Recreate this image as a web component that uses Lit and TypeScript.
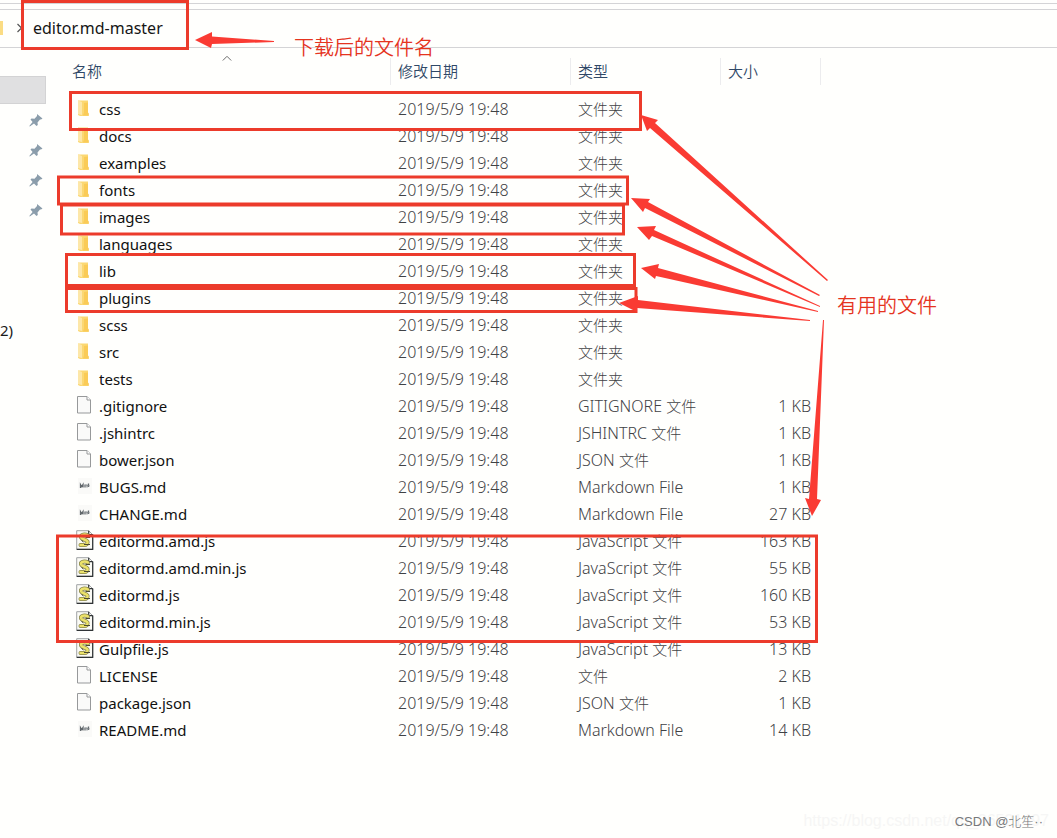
import { LitElement, html, css, svg } from "lit";
import { customElement, property } from "lit/decorators.js";

type Kind = "folder" | "file" | "md" | "js";

interface Entry {
  name: string;
  kind: Kind;
  format: string;
  suffix: string;
  size: string;
}

const MODIFIED = "2019/5/9 19:48";

const folder = (name: string): Entry => ({ name, kind: "folder", format: "", suffix: "文件夹", size: "" });
const file = (name: string, kind: Kind, format: string, suffix: string, size: string): Entry =>
  ({ name, kind, format, suffix, size });

const ENTRIES: Entry[] = [
  ...["css", "docs", "examples", "fonts", "images", "languages", "lib", "plugins", "scss", "src", "tests"].map(folder),
  file(".gitignore", "file", "GITIGNORE ", "文件", "1 KB"),
  file(".jshintrc", "file", "JSHINTRC ", "文件", "1 KB"),
  file("bower.json", "file", "JSON ", "文件", "1 KB"),
  file("BUGS.md", "md", "Markdown File", "", "1 KB"),
  file("CHANGE.md", "md", "Markdown File", "", "27 KB"),
  file("editormd.amd.js", "js", "JavaScript ", "文件", "163 KB"),
  file("editormd.amd.min.js", "js", "JavaScript ", "文件", "55 KB"),
  file("editormd.js", "js", "JavaScript ", "文件", "160 KB"),
  file("editormd.min.js", "js", "JavaScript ", "文件", "53 KB"),
  file("Gulpfile.js", "js", "JavaScript ", "文件", "13 KB"),
  file("LICENSE", "file", "", "文件", "2 KB"),
  file("package.json", "file", "JSON ", "文件", "1 KB"),
  file("README.md", "md", "Markdown File", "", "14 KB"),
];

@customElement("file-icon")
export class FileIcon extends LitElement {
  @property() kind: Kind = "file";

  static styles = css`
    :host { display: block; width: 18px; height: 20px; padding-bottom: 3px; }
    .glyph { display: block; }
  `;

  private shape() {
    switch (this.kind) {
      case "folder":
        return svg`
          <path d="M2 2.500h10v14l1 1.500H4l-2-1z" fill="#fbd873"/>
          <path d="M2 2.500l4 1.500v13l-4-1z" fill="#fde7a8"/>
          <path d="M8 5l4-.5v10l1 1v2H7l1-3z" fill="#fac850" opacity=".8"/>`;
      case "md":
        return svg`
          <rect x="2" y="2" width="14" height="16" fill="#fafaf8"/>
          <path d="M4.500 12V8.500l1.200 2L7 8.500v3M9 8.500v3M12.500 7.500v3.500" fill="none" stroke="#62686c" stroke-width="1.300"/>
          <path d="M9.500 9h1.500v2.500M11.500 9.700h2" fill="none" stroke="#7d8386" stroke-width="1.100"/>`;
      case "js":
        return svg`
          <path d="M.7.7h12l4 4v14.600h-16z" fill="#fbfbf6" stroke="#a0a3a5" stroke-width="1"/>
          <path d="M12.700.7v4h4M16.700 4.500v14.800h-16" fill="none" stroke="#303436" stroke-width="1.200"/>
          <path d="M12 5.500C9 3.800 4.500 4.500 5 7.300c.5 2.300 5.500 2 6.500 4.200.6 2-1 3.500-3.500 3.500H4.500" fill="none" stroke="#85824a" stroke-width="4" stroke-linecap="round"/>
          <path d="M12 5.500C9 3.800 4.500 4.500 5 7.300c.5 2.300 5.500 2 6.500 4.200.6 2-1 3.500-3.500 3.500H4.500" fill="none" stroke="#ece26a" stroke-width="2.500" stroke-linecap="round"/>
          <path d="M9.500 7.500h4.500M8 14.500h6M5.500 10.500l2 1.500" fill="none" stroke="#4b4a32" stroke-width="1"/>`;
      default:
        return svg`
          <path d="M1.500 1.500h9.500l3.500 3.500v13h-13z" fill="#fafaf9" stroke="#97999a"/>
          <path d="M11 1.500v3.500h3.500" fill="#fff" stroke="#97999a"/>`;
    }
  }

  render() {
    return html`<svg class="glyph" width="18" height="20" viewBox="0 0 18 20" aria-hidden="true">${this.shape()}</svg>`;
  }
}

@customElement("address-bar")
export class AddressBar extends LitElement {
  static styles = css`
    :host { display: block; padding-top: 3px; }
    .strip { height: 5px; border-top: 1px solid #d4d4d6; }
    .path {
      display: flex; align-items: center; height: 35px; padding-bottom: 2px;
      border-top: 1px solid #d4d4d6; border-bottom: 1px solid #d4d4d6;
    }
    .tip { width: 3px; height: 14px; background: #fbdc83; }
    .chevron { margin-left: 13px; }
    .crumb { margin-left: 10px; font-size: 16px; line-height: 24px; color: #161616; text-decoration: none; }
  `;

  render() {
    return html`
      <div class="strip"></div>
      <nav class="path" aria-label="Path">
        <span class="tip"></span>
        <svg class="chevron" width="7" height="10" viewBox="0 0 7 10" aria-hidden="true">
          <path d="M1.500 1l4 4-4 4" fill="none" stroke="#555" stroke-width="1.200"/>
        </svg>
        <a class="crumb" href="#">editor.md-master</a>
      </nav>`;
  }
}

@customElement("side-nav")
export class SideNav extends LitElement {
  static styles = css`
    :host { display: block; width: 46px; padding-top: 27px; }
    .list { list-style: none; margin: 0; padding: 0; }
    .item { display: flex; align-items: center; justify-content: flex-end; height: 30px; padding-right: 3px; }
    .selected { background: #e0e0e1; height: 28px; margin: 1px 0; border: 1px solid #d3d3d4; border-left: 0; box-sizing: border-box; }
    .drive { justify-content: flex-start; margin-top: 90px; font-size: 15px; color: #1b1b1b; }
  `;

  render() {
    return html`
      <ul class="list">
        <li class="item selected"></li>
        ${[1, 2, 3, 4].map(() => html`
          <li class="item">
            <svg width="14" height="14" viewBox="0 0 14 14" aria-hidden="true">
              <path d="M8 1l5.500 4.500-1.500 1-1 0-2.500 3 .3 2.500-1.300 1L5 10.500.8 13.600l-.5-.5L3.600 9 1.500 6.500l1-1 3 .2L8 3z" fill="#8b9dab"/>
            </svg>
          </li>`)}
        <li class="item drive">2)</li>
      </ul>`;
  }
}

@customElement("file-table")
export class FileTable extends LitElement {
  static styles = css`
    :host { display: block; flex: 1; min-width: 0; padding-top: 10px; }
    .files { width: 100%; table-layout: fixed; border-collapse: collapse; font-size: 15px; line-height: 27px; }
    .c-name { width: 327px; }
    .c-date { width: 180px; }
    .c-type { width: 150px; }
    .c-size { width: 100px; }
    .head { padding: 0 0 11px; font-weight: 350; text-align: left; }
    .sort {
      position: relative; display: block; width: 100%; height: 27px; padding: 0 0 0 7px; border: 0;
      border-right: 1px solid #ececee; background: none; color: #2f4867; font: inherit; text-align: left;
    }
    .first { padding-left: 8px; }
    .caret { position: absolute; left: 158px; top: -3px; }
    .cell { height: 27px; padding: 0 0 0 7px; color: #3f4245; font-size: 16px; font-weight: 300; white-space: nowrap; }
    .entry { display: flex; align-items: center; gap: 5px; height: 27px; padding-left: 5px; color: #111; font-size: 15px; font-weight: 400; }
    .han { font-size: 15px; line-height: 1; }
    .size { padding-right: 10px; text-align: right; }
  `;

  render() {
    return html`
      <table class="files">
        <colgroup>
          <col class="c-name"><col class="c-date"><col class="c-type"><col class="c-size"><col>
        </colgroup>
        <thead>
          <tr>
            <th class="head">
              <button class="sort first">名称
                <svg class="caret" width="10" height="7" viewBox="0 0 10 7" aria-hidden="true">
                  <path d="M.8 5.500L5 1.300l4.200 4.200" fill="none" stroke="#6c6c6c"/>
                </svg>
              </button>
            </th>
            <th class="head"><button class="sort">修改日期</button></th>
            <th class="head"><button class="sort">类型</button></th>
            <th class="head"><button class="sort">大小</button></th>
            <th></th>
          </tr>
        </thead>
        <tbody>
          ${ENTRIES.map((e) => html`
            <tr>
              <td class="cell"><div class="entry"><file-icon .kind=${e.kind}></file-icon>${e.name}</div></td>
              <td class="cell">${MODIFIED}</td>
              <td class="cell">${e.format}<span class="han">${e.suffix}</span></td>
              <td class="cell size">${e.size}</td>
              <td></td>
            </tr>`)}
        </tbody>
      </table>`;
  }
}

/* Red frames as x, y, width, height. */
const FRAMES = [
  [22.5, 1.5, 165, 47],
  [70.5, 92.5, 570, 37],
  [58.5, 177, 569, 27],
  [61.5, 205, 562, 29],
  [66.5, 254.500, 568, 31],
  [66.5, 288.500, 569.500, 23],
  [57.5, 536, 759, 105.500],
];

/* Tapering arrows, each one a closed outline that starts at the tip of its head. */
const ARROWS = [
  "195,40 212,32 212,36.500 274,41 274,42 212,44 211,48",
  "641,115 658,120 655,123 828,280 827,281 650,128 647,131",
  "631,198 650,199 648,202 820,295 819,296 645,208 643,212",
  "637,227 656,226 654,230 820,306 820,307 652,236 649,240",
  "641,268 659,264 658,268 818,311 818,312 656,276 655,279",
  "619,303 638,296 638,300 810,320 810,321 637,308 637,312",
  "812,516 805,498 809,499 823,320 824,320 817,499 821,500",
];

@customElement("red-marks")
export class RedMarks extends LitElement {
  static styles = css`
    :host { position: absolute; inset: 0; overflow: hidden; pointer-events: none; }
    .marks { position: absolute; left: 0; top: 0; }
    .frame { fill: none; stroke: #ec3b2b; stroke-width: 3; }
    .arrow { fill: #fa3b33; }
    .note { position: absolute; color: #e5341f; font-size: 20px; line-height: 28px; font-weight: 350; }
    .note-name { left: 294px; top: 34px; }
    .note-used { left: 837px; top: 292px; }
  `;

  render() {
    return html`
      <svg class="marks" width="1057" height="838" aria-hidden="true">
        ${FRAMES.map(([x, y, w, h]) => svg`<rect class="frame" x=${x} y=${y} width=${w} height=${h}/>`)}
        ${ARROWS.map((p) => svg`<polygon class="arrow" points=${p}/>`)}
      </svg>
      <span class="note note-name">下载后的文件名</span>
      <span class="note note-used">有用的文件</span>`;
  }
}

@customElement("app-root")
export class AppRoot extends LitElement {
  static styles = css`
    :host {
      display: flex; flex-direction: column; position: relative; min-height: 100vh; box-sizing: border-box;
      background: #fffffd; font-family: "Noto Sans", "Noto Sans CJK SC", sans-serif;
    }
    .body { display: flex; gap: 18px; flex: 1; }
    .credit { position: absolute; right: 14px; bottom: 4px; color: #77797b; font: 300 13px/24px "Liberation Sans", "Noto Sans CJK SC", sans-serif; }
    .source { position: absolute; right: 8px; bottom: 5px; color: #f6f6f5; font: 16px/24px "Liberation Sans", sans-serif; }
  `;

  render() {
    return html`
      <address-bar></address-bar>
      <main class="body">
        <side-nav></side-nav>
        <file-table></file-table>
      </main>
      <red-marks></red-marks>
      <span class="source">https://blog.csdn.net/qq_36521497</span>
      <span class="credit">CSDN @北笙··</span>`;
  }
}
